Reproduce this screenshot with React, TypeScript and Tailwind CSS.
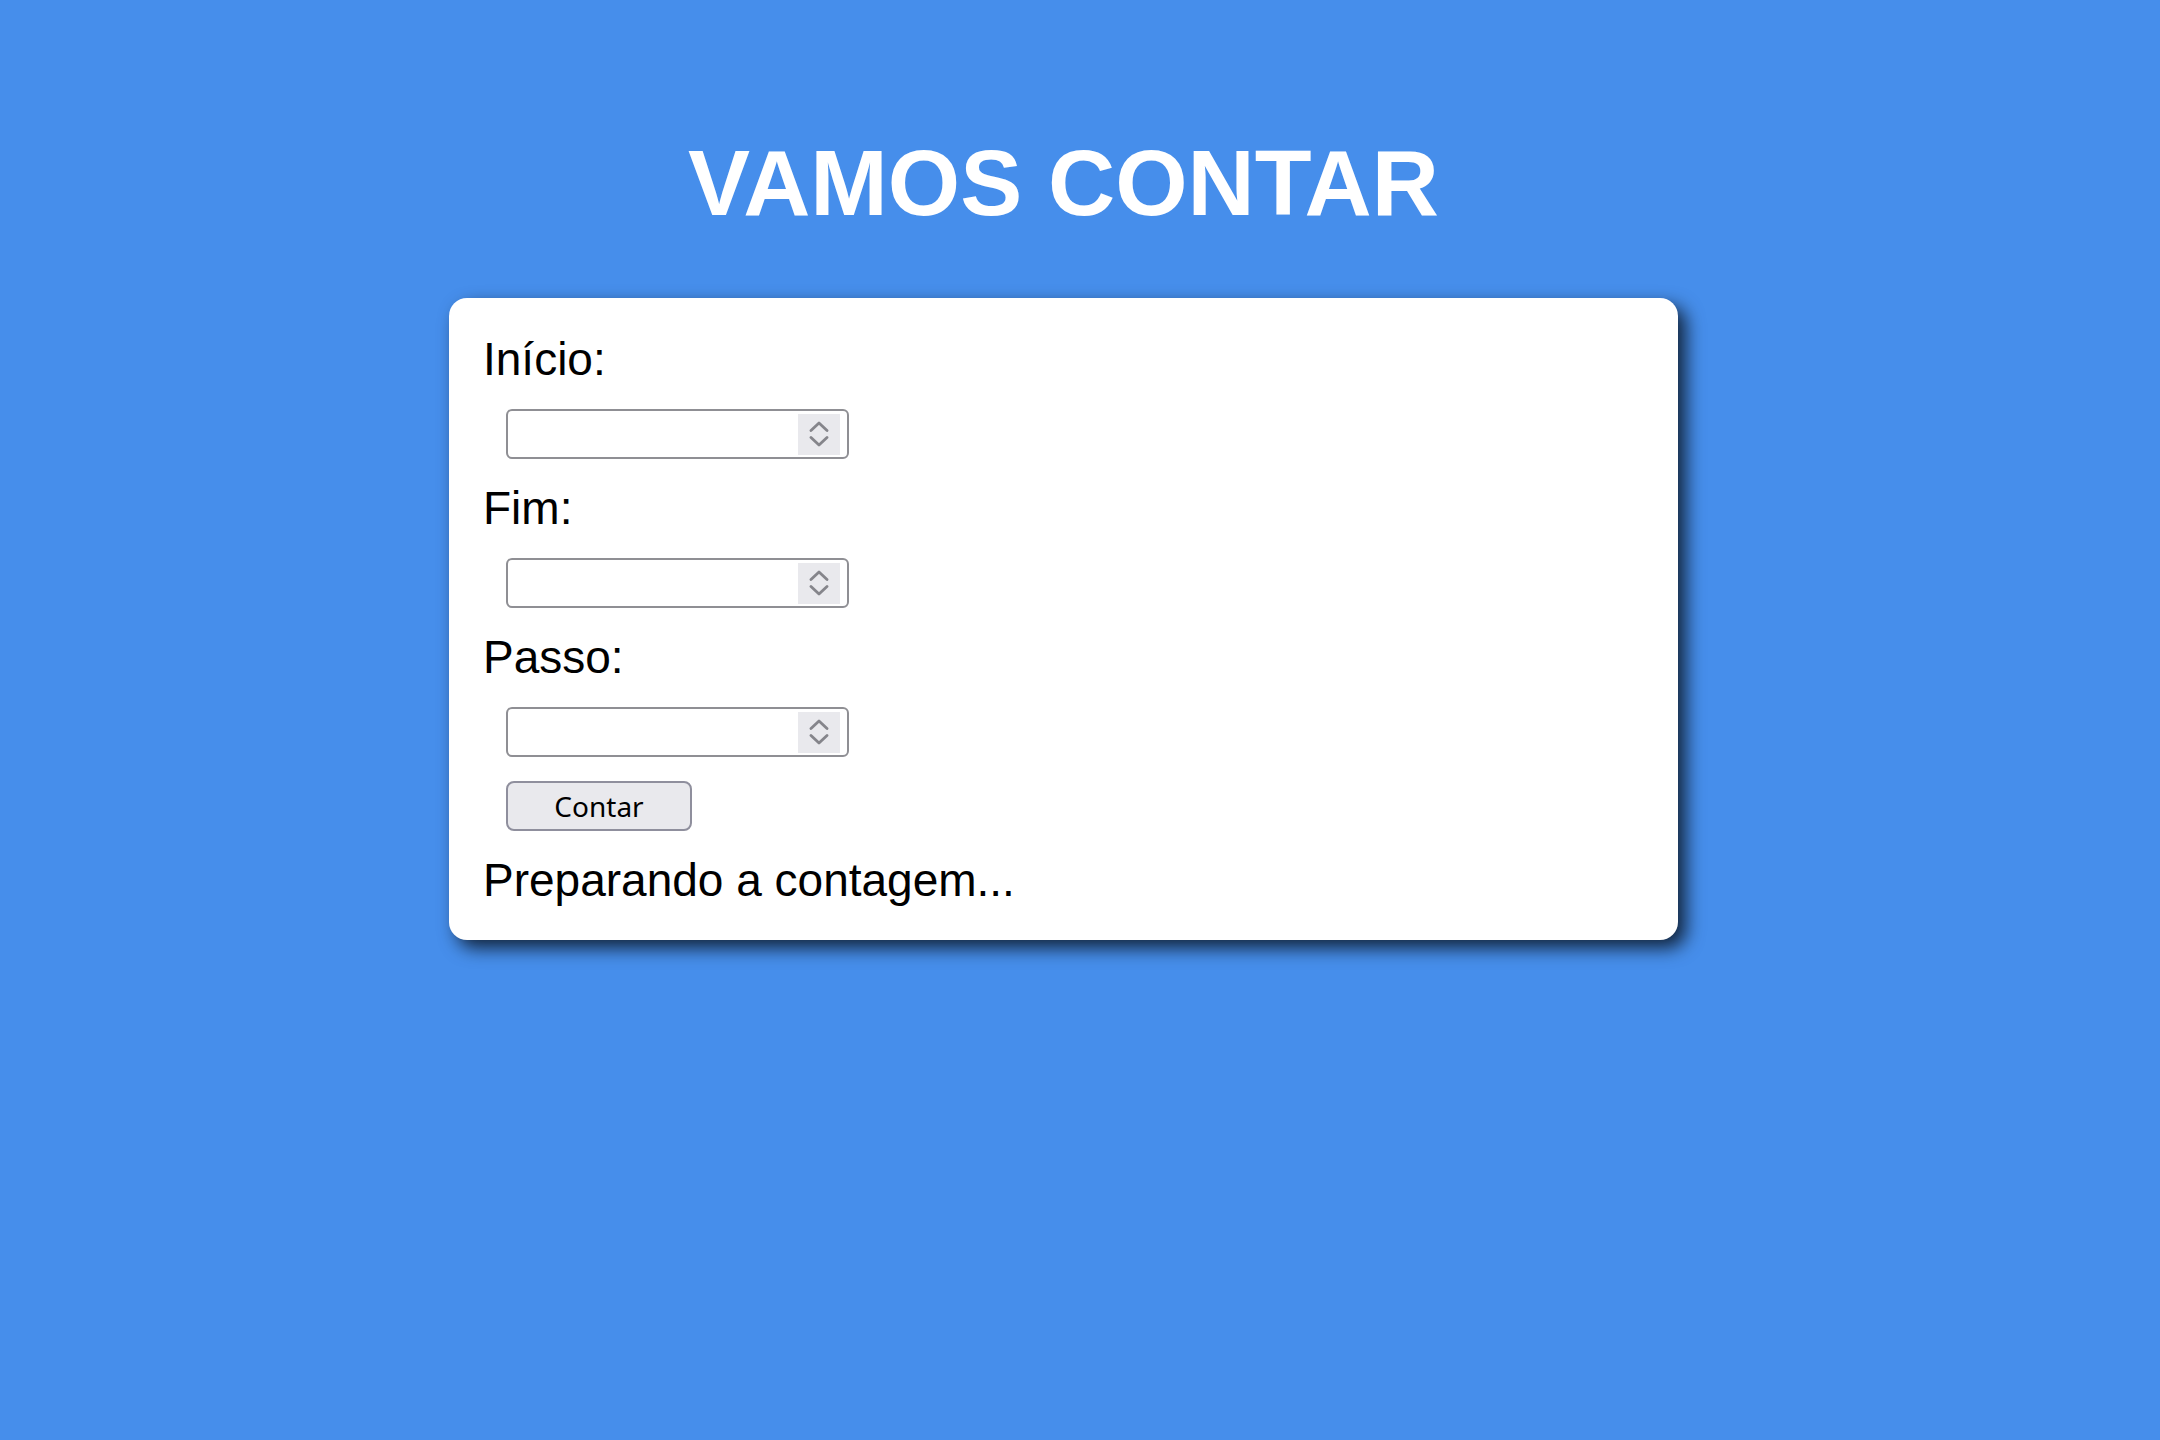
import React from "react";

function Spinner() {
  return (
    <div className="flex h-[41px] w-[42px] flex-col items-center justify-center gap-[4px] bg-[#e9e9ed]">
      <svg width="22" height="11" viewBox="0 0 22 11" fill="none">
        <path d="M3 9.5 L11 2 L19 9.5" stroke="#85858b" strokeWidth="2.8" strokeLinecap="round" strokeLinejoin="round" />
      </svg>
      <svg width="22" height="11" viewBox="0 0 22 11" fill="none">
        <path d="M3 1.5 L11 9 L19 1.5" stroke="#85858b" strokeWidth="2.8" strokeLinecap="round" strokeLinejoin="round" />
      </svg>
    </div>
  );
}

function NumberField({ id }: { id: string }) {
  return (
    <div className="ml-[57px] flex h-[50px] w-[343px] items-center rounded-[6px] border-2 border-[#8f8f94] bg-white pr-[7px]">
      <input
        id={id}
        type="text"
        inputMode="numeric"
        className="h-full min-w-0 flex-1 bg-transparent px-3 text-[28px] outline-none"
      />
      <Spinner />
    </div>
  );
}

function Label({ htmlFor, children }: { htmlFor: string; children: React.ReactNode }) {
  return (
    <label htmlFor={htmlFor} className="block pl-[34px] text-[46px] leading-[51px] text-black">
      {children}
    </label>
  );
}

export default function App() {
  return (
    <div className="min-h-[1440px] w-full bg-[#468eeb] pr-[33px] font-['Liberation_Sans',Arial,sans-serif]">
      <div className="flex flex-col items-center pt-[131px]">
        <h1 className="text-[93px] font-bold leading-[104px] text-white">VAMOS CONTAR</h1>
        <div className="mt-[63px] flex w-[1229px] flex-col gap-[24px] rounded-[18px] bg-white pt-[36px] pb-[34px] shadow-[8px_8px_18px_rgba(0,0,0,0.75)]">
          <Label htmlFor="inicio">Início:</Label>
          <NumberField id="inicio" />
          <Label htmlFor="fim">Fim:</Label>
          <NumberField id="fim" />
          <Label htmlFor="passo">Passo:</Label>
          <NumberField id="passo" />
          <div className="ml-[57px]">
            <button className="h-[50px] w-[186px] rounded-[8px] border-2 border-[#8f8f9d] bg-[#e9e9ed] font-['Noto_Sans',sans-serif] text-[28px] leading-none text-black">
              Contar
            </button>
          </div>
          <p className="pl-[34px] text-[46px] leading-[51px] text-black">Preparando a contagem...</p>
        </div>
      </div>
    </div>
  );
}
